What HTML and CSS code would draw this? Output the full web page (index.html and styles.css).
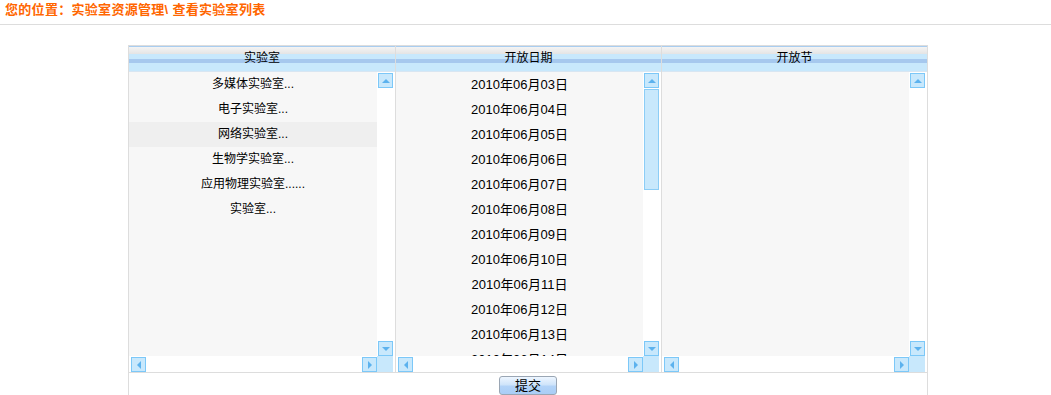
FILE: index.html
```html
<!DOCTYPE html>
<html lang="zh-CN">
  <head>
    <meta charset="UTF-8" />
    <title>查看实验室列表</title>
    <link rel="stylesheet" href="styles.css">
  </head>
  <body>
    <div class="crumb">您的位置：实验室资源管理\ 查看实验室列表</div>

    <div class="panel">
      <div class="cols">
        <div class="col">
          <div class="col-head">实验室</div>
          <div class="listbox">
            <ul class="items">
              <li>多媒体实验室...</li>
              <li>电子实验室...</li>
              <li class="selected">网络实验室...</li>
              <li>生物学实验室...</li>
              <li>应用物理实验室......</li>
              <li>实验室...</li>
            </ul>
            <div class="vbar">
              <span class="arrow up"></span>
              <span class="track"></span>
              <span class="arrow down"></span>
            </div>
            <div class="hbar">
              <span class="arrow left"></span>
              <span class="arrow right"></span>
            </div>
            <div class="corner"></div>
          </div>
        </div>

        <div class="col">
          <div class="col-head">开放日期</div>
          <div class="listbox">
            <ul class="items dates">
              <li>2010年06月03日</li>
              <li>2010年06月04日</li>
              <li>2010年06月05日</li>
              <li>2010年06月06日</li>
              <li>2010年06月07日</li>
              <li>2010年06月08日</li>
              <li>2010年06月09日</li>
              <li>2010年06月10日</li>
              <li>2010年06月11日</li>
              <li>2010年06月12日</li>
              <li>2010年06月13日</li>
              <li>2010年06月14日</li>
            </ul>
            <div class="vbar">
              <span class="arrow up"></span>
              <span class="track"><span class="thumb"></span></span>
              <span class="arrow down"></span>
            </div>
            <div class="hbar">
              <span class="arrow left"></span>
              <span class="arrow right"></span>
            </div>
            <div class="corner"></div>
          </div>
        </div>

        <div class="col">
          <div class="col-head">开放节</div>
          <div class="listbox">
            <ul class="items"></ul>
            <div class="vbar">
              <span class="arrow up"></span>
              <span class="track"></span>
              <span class="arrow down"></span>
            </div>
            <div class="hbar">
              <span class="arrow left"></span>
              <span class="arrow right"></span>
            </div>
            <div class="corner"></div>
          </div>
        </div>
      </div>

      <div class="actions">
        <button class="submit">提交</button>
      </div>
    </div>
  </body>
</html>
```

FILE: styles.css
```css
body {
  margin: 0;
  font-family: "Liberation Sans", "Noto Sans CJK SC", sans-serif;
  font-size: 12px;
  color: #000;
  background: #fff;
  overflow: hidden;
}

.crumb {
  padding: 0 5px 4px;
  line-height: 20px;
  font-size: 13px;
  font-weight: bold;
  letter-spacing: 0.3px;
  color: #ff6600;
  border-bottom: 1px solid #dddddd;
}

.panel {
  width: 800px;
  margin: 20px 0 0 128px;
  border: 1px solid #dddddd;
  border-bottom: none;
  box-sizing: border-box;
}

.cols {
  display: grid;
  grid-template-columns: repeat(3, 1fr);
  border-bottom: 1px solid #dddddd;
}

.col + .col {
  border-left: 1px solid #dddddd;
}

.col-head {
  height: 25px;
  line-height: 24px;
  text-align: center;
  border-bottom: 1px solid #d8e6f2;
  background: linear-gradient(
    to bottom,
    #a9cdf0 0px,
    #a9cdf0 1px,
    #f4f4f4 1px,
    #e4e4e4 8px,
    #c8e8fc 8px,
    #c8e8fc 13px,
    #a6c8ee 13px,
    #a6c8ee 17px,
    #c8e8fc 17px,
    #c8e8fc 25px
  );
}

.listbox {
  display: grid;
  grid-template-columns: 1fr 18px;
  grid-template-rows: 284px 16px;
  background: #fff;
}

.items {
  list-style: none;
  margin: 0;
  padding: 0;
  overflow: hidden;
  background: #f7f7f7;
}

.items li {
  height: 25px;
  line-height: 25px;
  text-align: center;
  white-space: nowrap;
}

.items li.selected {
  background: #efefef;
}

.items.dates li {
  font-size: 13px;
}

.vbar {
  display: flex;
  flex-direction: column;
  padding: 1px 2px 0 1px;
}

.vbar .track {
  flex: 1;
  padding-top: 1px;
}

.thumb {
  display: block;
  height: 101px;
  background: #c8e8fc;
  border: 1px solid #8ccdf6;
  box-sizing: border-box;
}

.hbar {
  display: flex;
  justify-content: space-between;
  padding: 1px 0 0 2px;
}

.corner {
  background: #c8e8fc;
  margin-right: 2px;
}

.arrow {
  width: 15px;
  height: 15px;
  box-sizing: border-box;
  background: #c8e8fc;
  border: 1px solid #7cc8f8;
  display: flex;
  justify-content: center;
  align-items: center;
  flex-shrink: 0;
}

.arrow::before {
  content: "";
  width: 0;
  height: 0;
}

.arrow.up::before {
  border-left: 4px solid transparent;
  border-right: 4px solid transparent;
  border-bottom: 4px solid #5cb2ee;
}

.arrow.down::before {
  border-left: 4px solid transparent;
  border-right: 4px solid transparent;
  border-top: 4px solid #5cb2ee;
}

.arrow.left::before {
  border-top: 4px solid transparent;
  border-bottom: 4px solid transparent;
  border-right: 4px solid #5cb2ee;
}

.arrow.right::before {
  border-top: 4px solid transparent;
  border-bottom: 4px solid transparent;
  border-left: 4px solid #5cb2ee;
}

.actions {
  height: 40px;
  display: flex;
  justify-content: center;
  align-items: flex-start;
  padding-top: 3px;
}

.submit {
  width: 58px;
  height: 19px;
  padding: 0;
  font-family: "Liberation Sans", "Noto Sans CJK SC", sans-serif;
  font-size: 13px;
  line-height: 17px;
  color: #000;
  border: 1px solid #9aa6b4;
  border-radius: 3px;
  background: linear-gradient(to bottom, #eef6ff 0%, #cfe4fa 45%, #b2d3f8 55%, #a9cdf6 100%);
  cursor: pointer;
}
```
